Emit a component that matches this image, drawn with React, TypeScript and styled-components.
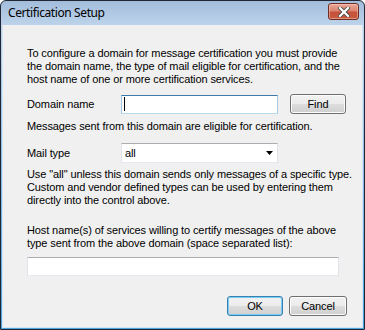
import React from "react";
import styled, { createGlobalStyle } from "styled-components";

const Global = createGlobalStyle`
  html, body { margin: 0; padding: 0; background: #ffffff; }
  * { box-sizing: border-box; }
`;

const Window = styled.div`
  width: 365px;
  height: 330px;
  border: 1px solid #1e2733;
  border-radius: 6px 6px 0 0;
  background: linear-gradient(to bottom, #a2bcdb 0px, #bdd3eb 24px, #9cc3e6 120px, #4aa3dc 100%);
  display: flex;
  flex-direction: column;
  overflow: hidden;
`;

const TitleBar = styled.div`
  height: 24px;
  flex: none;
  display: flex;
  align-items: center;
  justify-content: space-between;
  padding: 0 5px 0 7px;
`;

const Title = styled.span`
  font-family: "Noto Sans", "Open Sans", sans-serif;
  font-size: 12px;
  letter-spacing: -0.4px;
  color: #000;
  margin-top: -1px;
`;

const CloseButton = styled.div`
  width: 31px;
  height: 17px;
  margin-top: -3px;
  border: 1px solid #6e2b22;
  border-radius: 3px;
  background: linear-gradient(to bottom, #e9a898 0%, #d98470 45%, #c8503a 55%, #c65a3f 100%);
  box-shadow: inset 0 0 0 1px rgba(255, 220, 210, 0.45);
  display: flex;
  align-items: center;
  justify-content: center;
`;

const Body = styled.div`
  flex: 1;
  margin: 0 1px 1px 1px;
  background: #f0f0f0;
  border: 1px solid #d6e6f5;
  border-top: none;
  padding: 22px 15px 10px 24px;
  font-family: "Liberation Sans", Arial, sans-serif;
  font-size: 11px;
  letter-spacing: -0.11px;
  color: #000;
  display: flex;
  flex-direction: column;
`;

const Para = styled.p<{ $top: number }>`
  margin: ${(p) => p.$top}px 0 0 0;
  line-height: 13px;
  white-space: nowrap;
`;

const FieldRow = styled.div<{ $top: number }>`
  display: flex;
  align-items: center;
  margin-top: ${(p) => p.$top}px;
  height: 20px;
`;

const Label = styled.span`
  width: 94px;
  flex: none;
`;

const TextBox = styled.div<{ $focused?: boolean; $width: number }>`
  width: ${(p) => p.$width}px;
  height: 19px;
  flex: none;
  background: #fff;
  border: 1px solid;
  border-color: ${(p) =>
    p.$focused ? "#3d7bad #a4c9e3 #b7d9ed #a4c9e3" : "#abadb3 #e2e3ea #e3e9ef #e2e3ea"};
  display: flex;
  align-items: center;
  padding-left: 2px;
`;

const Caret = styled.span`
  width: 1px;
  height: 14px;
  background: #000;
`;

const Combo = styled.div`
  width: 157px;
  height: 20px;
  flex: none;
  background: #fff;
  border: 1px solid;
  border-color: #abadb3 #e2e3ea #e3e9ef #e2e3ea;
  display: flex;
  align-items: center;
  justify-content: space-between;
  padding: 0 4px 0 3px;
`;

const Button = styled.div<{ $default?: boolean; $width: number }>`
  width: ${(p) => p.$width}px;
  height: 20px;
  flex: none;
  border: 1px solid ${(p) => (p.$default ? "#3c7fb1" : "#707070")};
  border-radius: 3px;
  background: linear-gradient(to bottom, #f2f2f2 0%, #ebebeb 50%, #dddddd 51%, #cfcfcf 100%);
  box-shadow: inset 0 0 0 1px ${(p) => (p.$default ? "#73cdf5" : "#fcfcfc")};
  display: flex;
  align-items: center;
  justify-content: center;
  line-height: 1;
`;

const FindButton = styled(Button)`
  margin-left: 12px;
`;

const ButtonRow = styled.div`
  display: flex;
  justify-content: flex-end;
  gap: 6px;
  margin-top: 20px;
`;

const HostBox = styled(TextBox)`
  margin-top: 7px;
`;

export default function App() {
  return (
    <>
      <Global />
      <Window>
        <TitleBar>
          <Title>Certification Setup</Title>
          <CloseButton>
            <svg width="12" height="10" viewBox="0 0 12 10">
              <path
                d="M2 1 L10 9 M10 1 L2 9"
                stroke="#4b4b4b"
                strokeWidth="4"
                strokeLinecap="square"
                fill="none"
              />
              <path
                d="M2 1 L10 9 M10 1 L2 9"
                stroke="#ffffff"
                strokeWidth="2.2"
                strokeLinecap="square"
                fill="none"
              />
            </svg>
          </CloseButton>
        </TitleBar>
        <Body>
          <Para $top={0}>
            To configure a domain for message certification you must provide
            <br />
            the domain name, the type of mail eligible for certification, and the
            <br />
            host name of one or more certification services.
          </Para>
          <FieldRow $top={8}>
            <Label>Domain name</Label>
            <TextBox $focused $width={157}>
              <Caret />
            </TextBox>
            <FindButton $width={56}>Find</FindButton>
          </FieldRow>
          <Para $top={6}>Messages sent from this domain are eligible for certification.</Para>
          <FieldRow $top={10}>
            <Label>Mail type</Label>
            <Combo>
              <span>all</span>
              <svg width="7" height="4" viewBox="0 0 7 4">
                <path d="M0 0 H7 L3.5 4 Z" fill="#000" />
              </svg>
            </Combo>
          </FieldRow>
          <Para $top={5}>
            Use "all" unless this domain sends only messages of a specific type.
            <br />
            Custom and vendor defined types can be used by entering them
            <br />
            directly into the control above.
          </Para>
          <Para $top={17}>
            Host name(s) of services willing to certify messages of the above
            <br />
            type sent from the above domain (space separated list):
          </Para>
          <HostBox $width={312} />
          <ButtonRow>
            <Button $default $width={56}>OK</Button>
            <Button $width={58}>Cancel</Button>
          </ButtonRow>
        </Body>
      </Window>
    </>
  );
}
